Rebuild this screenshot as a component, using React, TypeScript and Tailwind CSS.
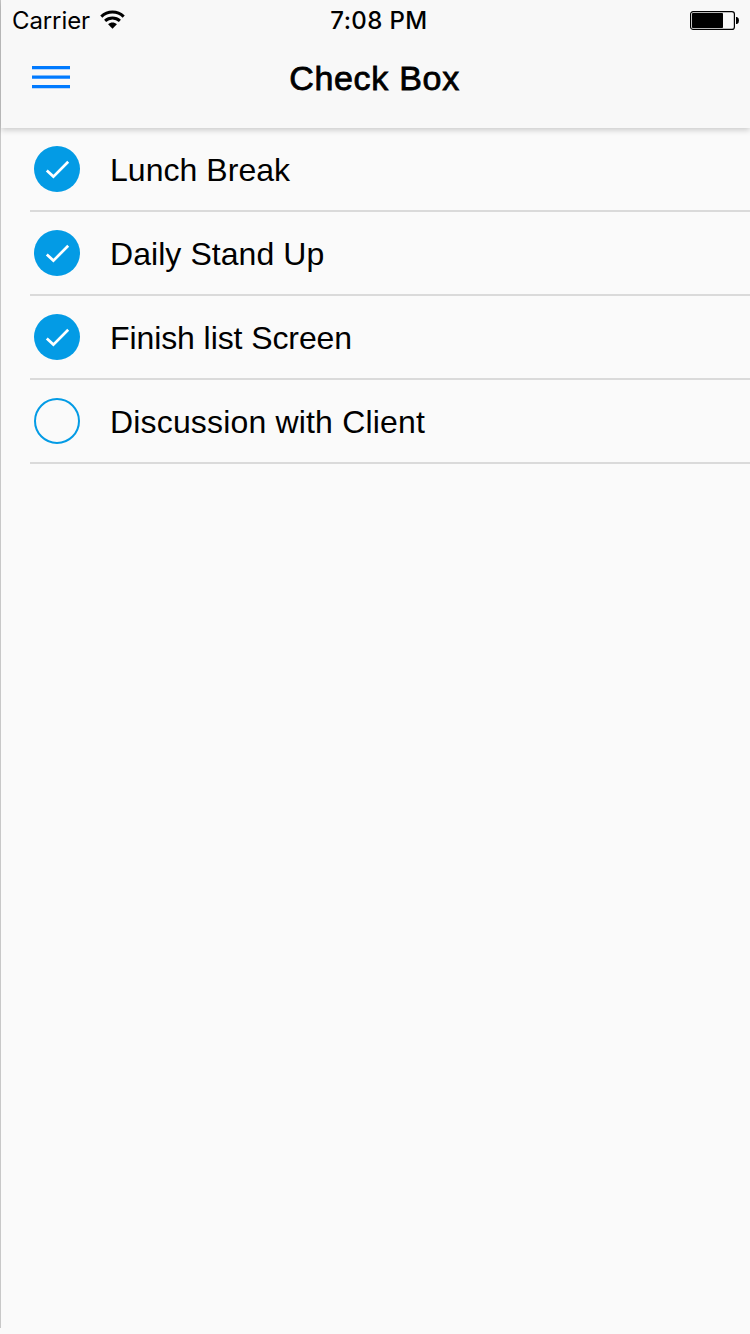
type Task = { label: string; done: boolean; tracking: string };

const tasks: Task[] = [
  { label: "Lunch Break", done: true, tracking: "tracking-[0.04px]" },
  { label: "Daily Stand Up", done: true, tracking: "tracking-[0.06px]" },
  { label: "Finish list Screen", done: true, tracking: "tracking-[-0.09px]" },
  { label: "Discussion with Client", done: false, tracking: "tracking-[0.17px]" },
];

function WifiIcon() {
  return (
    <svg className="mb-px" width="26" height="19" viewBox="0 0 26 19" fill="none" stroke="#000" strokeWidth="3">
      <path d="M1.3 6.6 C7.6 0.5 17.4 0.5 23.7 6.6" />
      <path d="M5.1 10.8 C9.3 6.9 15.7 6.9 19.9 10.8" />
      <path d="M8.1 14.3 C10.6 11.8 14.4 11.8 16.9 14.3 L12.5 18.7 Z" fill="#000" stroke="none" />
    </svg>
  );
}

function BatteryIcon() {
  return (
    <svg width="50" height="20" viewBox="0 0 50 20">
      <rect x="0.6" y="1.6" width="43.8" height="17.8" rx="2.5" fill="none" stroke="#000" strokeWidth="1.2" />
      <rect x="2" y="3" width="31" height="15" rx="0.8" fill="#000" />
      <path d="M46 7 H47 Q49 7.6 49 10.5 Q49 13.4 47 14 H46 Z" fill="#000" />
    </svg>
  );
}

function StatusBar() {
  return (
    <div className="grid h-10 grid-cols-3 items-center pr-[10px] pl-[11px] font-['Inter',sans-serif] text-2xl">
      <div className="flex items-center gap-[10px]">
        <span className="pt-[2px] tracking-[-0.1px]">Carrier</span>
        <WifiIcon />
      </div>
      <span className="pt-[2px] pl-[6px] text-center font-medium tracking-[0.4px]">7:08 PM</span>
      <div className="flex justify-end">
        <BatteryIcon />
      </div>
    </div>
  );
}

function CheckBox({ checked }: { checked: boolean }) {
  return (
    <svg width="46" height="46" viewBox="0 0 46 46" fill="none" role="checkbox" aria-checked={checked}>
      {checked ? (
        <>
          <circle cx="23" cy="23" r="23" fill="#039be5" />
          <path d="M12.8 24.4 L19.4 30.6 L34.2 15.8" stroke="#fff" strokeWidth="2.7" />
        </>
      ) : (
        <circle cx="23" cy="23" r="22" stroke="#039be5" strokeWidth="2" />
      )}
    </svg>
  );
}

export default function App() {
  return (
    <div className="flex h-[1334px] w-[750px] bg-[#fafafa] font-['Liberation_Sans',Arial,sans-serif] text-black">
      <div className="h-[1328px] w-px shrink-0 bg-[#c8c8c8]" />
      <div className="flex flex-1 flex-col">
        <header className="h-32 bg-[#f8f8f8] shadow-[0_2px_6px_rgba(0,0,0,0.2)]">
          <StatusBar />
          <div className="grid h-[76px] grid-cols-[90px_1fr_92px] items-center">
            <svg className="mb-[2px] ml-[31px]" width="38" height="24" viewBox="0 0 38 24" stroke="#007aff" strokeWidth="3.2">
              <path d="M0 2.7 H38 M0 12.2 H38 M0 21.6 H38" />
            </svg>
            <h1 className="text-center text-[34px] tracking-[0.7px] [-webkit-text-stroke:0.8px_black]">Check Box</h1>
          </div>
        </header>
        <ul className="pl-[29px]">
          {tasks.map((task) => (
            <li key={task.label} className="flex h-[84px] items-center gap-[30px] border-b-2 border-[#dadada] pl-1">
              <CheckBox checked={task.done} />
              <span className={`pt-[2px] text-[32px] leading-10 ${task.tracking}`}>{task.label}</span>
            </li>
          ))}
        </ul>
      </div>
    </div>
  );
}
